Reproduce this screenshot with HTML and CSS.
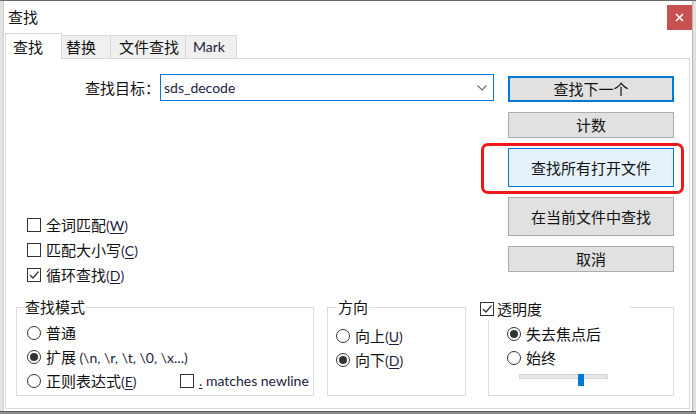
FILE: index.html
```html
<!DOCTYPE html>
<html lang="zh-CN">
<head>
<meta charset="utf-8">
<title>查找</title>
<link rel="stylesheet" href="styles.css">
</head>
<body>
<div class="screen">
  <div class="window">
    <div class="titlebar">
      <span class="title">查找</span>
      <div class="close"><svg width="9" height="9" viewBox="0 0 9 9"><path d="M1 1 L8 8 M8 1 L1 8" stroke="#fff" stroke-width="1.6" fill="none"/></svg></div>
    </div>
    <div class="tabs">
      <div class="tab active">查找</div>
      <div class="tab t2">替换</div>
      <div class="tab t3">文件查找</div>
      <div class="tab t4 latin">Mark</div>
    </div>
    <div class="panel">
      <div class="top">
        <div class="left">
          <div class="find-row">
            <span class="find-label">查找目标：</span>
            <div class="combo"><span class="combo-text latin">sds_decode</span><svg width="10" height="6" viewBox="0 0 10 6"><path d="M0.5 0.5 L5 5 L9.5 0.5" stroke="#6a6a6a" stroke-width="1.1" fill="none"/></svg></div>
          </div>
          <div class="checks">
            <div class="row"><span class="box"></span><span>全词匹配<span class="latin">(<u>W</u>)</span></span></div>
            <div class="row"><span class="box"></span><span>匹配大小写<span class="latin">(<u>C</u>)</span></span></div>
            <div class="row"><span class="box"><svg width="12" height="12" viewBox="0 0 12 12"><path d="M2 6 L5 9 L10.5 2.5" stroke="#333" stroke-width="1.2" fill="none"/></svg></span><span>循环查找<span class="latin">(<u>D</u>)</span></span></div>
          </div>
        </div>
        <div class="buttons">
          <div class="btn default">查找下一个</div>
          <div class="btn">计数</div>
          <div class="btn tall hover">查找所有打开文件<span class="highlight"></span></div>
          <div class="btn tall">在当前文件中查找</div>
          <div class="btn">取消</div>
        </div>
      </div>
      <div class="groups">
        <div class="group g1">
          <span class="legend">查找模式</span>
          <div class="gbody">
            <div class="row"><span class="radio"></span><span>普通</span></div>
            <div class="row"><span class="radio on"></span><span>扩展 <span class="latin">(\n, \r, \t, \0, \x...)</span></span></div>
            <div class="row"><span class="radio"></span><span class="regex-text">正则表达式<span class="latin">(<u>E</u>)</span></span><span class="box"></span><span class="latin"><u>.</u> matches newline</span></div>
          </div>
        </div>
        <div class="group g2">
          <span class="legend">方向</span>
          <div class="gbody">
            <div class="row"><span class="radio"></span><span>向上<span class="latin">(<u>U</u>)</span></span></div>
            <div class="row"><span class="radio on"></span><span>向下<span class="latin">(<u>D</u>)</span></span></div>
          </div>
        </div>
        <div class="group g3">
          <span class="legend"><span class="box"><svg width="12" height="12" viewBox="0 0 12 12"><path d="M2 6 L5 9 L10.5 2.5" stroke="#333" stroke-width="1.2" fill="none"/></svg></span><span>透明度</span></span>
          <div class="gbody">
            <div class="row"><span class="radio on"></span><span>失去焦点后</span></div>
            <div class="row"><span class="radio"></span><span>始终</span></div>
            <div class="slider"><div class="track"></div><div class="thumb"></div></div>
          </div>
        </div>
      </div>
    </div>
  </div>
  <div class="frame-bottom"></div>
</div>
</body>
</html>
```

FILE: styles.css
```css
* { box-sizing: border-box; }
html, body { margin: 0; padding: 0; }
body {
  width: 696px;
  height: 414px;
  overflow: hidden;
  background: #e2e2e2;
  font-family: "Noto Sans CJK SC", "Noto Sans", sans-serif;
  font-size: 15px;
  color: #111;
}
u { text-decoration: underline; text-underline-offset: 2px; }
.screen {
  height: 414px;
  border-top: 1px solid #6a6a6a;
  display: flex;
  flex-direction: column;
}
.window {
  height: 410px;
  width: 690px;
  margin-left: 3px;
  background: #fff;
  border-left: 1px solid #cfcfcf;
  border-right: 1px solid #b9b9b9;
  display: flex;
  flex-direction: column;
}
.frame-bottom {
  height: 3px;
  background: #8e8e8e;
  border-top: 1px solid #5a5a5a;
}
.titlebar {
  height: 32px;
  display: flex;
  align-items: center;
  justify-content: space-between;
  padding-left: 4px;
}
.title { line-height: 20px; }
.close {
  width: 25px;
  height: 25px;
  background: #c75050;
  display: flex;
  align-items: center;
  justify-content: center;
}
.tabs {
  height: 25px;
  display: flex;
  align-items: flex-end;
  padding-left: 1px;
}
.tab {
  height: 23px;
  border-top: 1px solid #d9d9d9;
  border-right: 1px solid #d9d9d9;
  background: #f0f0f0;
  line-height: 22px;
  white-space: nowrap;
}
.tab.active {
  height: 26px;
  width: 57px;
  margin-bottom: -1px;
  border-left: 1px solid #d9d9d9;
  background: #fff;
  line-height: 25px;
  padding-left: 7px;
  position: relative;
  z-index: 1;
}
.t2 { width: 49px; padding-left: 4px; }
.t3 { width: 75px; padding-left: 8px; }
.t4 { width: 51px; padding-left: 7px; color: #1c1c4a; font-size: 15px; }
.panel {
  height: 351px;
  width: 685px;
  margin-left: 1px;
  border: 1px solid #d9d9d9;
  padding: 15px 15px 0 10px;
}
.top { display: flex; gap: 14px; }
.left { width: 478px; }
.find-row {
  display: flex;
  height: 27px;
  padding-left: 69px;
}
.find-label { width: 75px; line-height: 27px; white-space: nowrap; }
.combo {
  flex: 1;
  border: 1px solid #0078d7;
  display: flex;
  align-items: center;
  justify-content: space-between;
  padding: 0 6px 0 3px;
}
.combo-text { line-height: 25px; color: #111; font-size: 14.5px; }
.checks {
  margin-top: 112px;
  margin-left: 11px;
  display: flex;
  flex-direction: column;
  gap: 1px;
}
.row {
  height: 24px;
  display: flex;
  align-items: center;
  gap: 5px;
  line-height: 20px;
  white-space: nowrap;
}
.box {
  width: 14px;
  height: 14px;
  border: 1px solid #333;
  background: #fff;
  flex: none;
  display: flex;
  align-items: center;
  justify-content: center;
}
.radio {
  width: 14px;
  height: 14px;
  border: 1px solid #333;
  border-radius: 50%;
  flex: none;
  display: flex;
  align-items: center;
  justify-content: center;
}
.radio.on::after {
  content: "";
  width: 8px;
  height: 8px;
  border-radius: 50%;
  background: #333;
}
.latin {
  font-family: Lato, "Noto Sans", sans-serif;
  font-size: 14px;
  color: #1c1c3c;
}
.buttons {
  width: 166px;
  margin-top: 2px;
  display: flex;
  flex-direction: column;
  gap: 10px;
}
.btn {
  height: 26px;
  background: #e1e1e1;
  border: 1px solid #adadad;
  display: flex;
  align-items: center;
  justify-content: center;
  line-height: 20px;
  white-space: nowrap;
}
.btn.default { border: 2px solid #0078d7; }
.btn.tall { height: 39px; }
.btn.hover {
  background: #e5f1fb;
  border-color: #0078d7;
  position: relative;
}
.highlight {
  position: absolute;
  left: -28px;
  right: -11px;
  top: -6px;
  bottom: -8px;
  border: 3px solid #f01818;
  border-radius: 7px;
}
.groups { display: flex; margin-top: 20px; }
.group {
  height: 89px;
  border: 1px solid #dcdcdc;
  display: flex;
  flex-direction: column;
}
.g1 { width: 298px; }
.g2 { width: 139px; margin-left: 13px; }
.g3 { width: 186px; margin-left: 22px; }
.legend {
  align-self: flex-start;
  margin-top: -11px;
  height: 20px;
  line-height: 20px;
  padding: 0 1px;
  background: #fff;
  white-space: nowrap;
}
.g1 .legend { margin-left: 7px; }
.g2 .legend { margin-left: 9px; }
.g3 .legend {
  margin-left: -10px;
  width: 151px;
  height: 23px;
  display: flex;
  align-items: center;
  gap: 3px;
}
.g1 .gbody { padding: 4px 0 0 10px; }
.g2 .gbody { padding: 7px 0 0 8px; }
.g3 .gbody { padding: 2px 0 0 18px; }
.regex-text { width: 129px; }
.slider {
  position: relative;
  width: 89px;
  height: 12px;
  margin: 3px 0 0 12px;
}
.track {
  margin-top: 4px;
  height: 5px;
  background: #e7e7e7;
  border: 1px solid #d6d6d6;
}
.thumb {
  position: absolute;
  left: 59px;
  top: 0;
  width: 6px;
  height: 12px;
  background: #0078d7;
}
```
